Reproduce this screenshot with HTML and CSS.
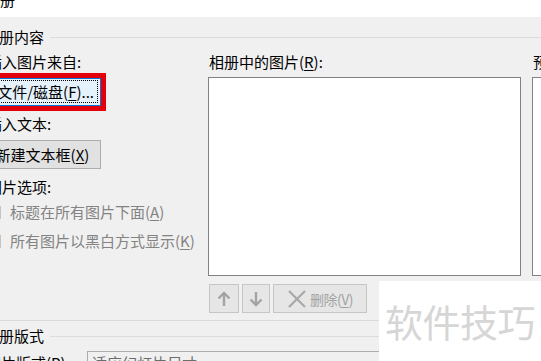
FILE: index.html
```html
<!DOCTYPE html>
<html lang="zh">
<head>
<meta charset="utf-8">
<link rel="stylesheet" href="styles.css">
</head>
<body>
<div class="dialog">
  <div class="titlebar"><span class="title">相册</span></div>
  <div class="content">
    <div class="group-head"><span class="group-label">相册内容</span><span class="group-line"></span></div>
    <div class="columns">
      <div class="left-col">
        <div class="label">插入图片来自:</div>
        <div class="highlight">
          <div class="btn btn-focus"><span class="focus-rect">文件/磁盘(<u>F</u>)...</span></div>
        </div>
        <div class="label label-text">插入文本:</div>
        <div class="btn btn-normal">新建文本框(<u>X</u>)</div>
        <div class="label label-opts">图片选项:</div>
        <div class="check-row first"><span class="checkbox"></span><span class="check-text">标题在所有图片下面(<u>A</u>)</span></div>
        <div class="check-row"><span class="checkbox"></span><span class="check-text">所有图片以黑白方式显示(<u>K</u>)</span></div>
      </div>
      <div class="mid-col">
        <div class="label">相册中的图片(<u>R</u>):</div>
        <div class="listbox"></div>
        <div class="btn-row">
          <div class="btn btn-disabled btn-up">
            <svg width="14" height="16" viewBox="0 0 14 16"><path d="M7 2 L7 15" stroke="#a3a3a3" stroke-width="2.4" fill="none"/><path d="M1.5 7.5 L7 2 L12.5 7.5" stroke="#a3a3a3" stroke-width="2.4" fill="none"/></svg>
          </div>
          <div class="btn btn-disabled btn-down">
            <svg width="14" height="16" viewBox="0 0 14 16"><path d="M7 1 L7 14" stroke="#a3a3a3" stroke-width="2.4" fill="none"/><path d="M1.5 8.5 L7 14 L12.5 8.5" stroke="#a3a3a3" stroke-width="2.4" fill="none"/></svg>
          </div>
          <div class="btn btn-disabled btn-del">
            <svg width="20" height="18" viewBox="0 0 20 18"><path d="M2 1 L18 17 M18 1 L2 17" stroke="#a8a8a8" stroke-width="2.2" fill="none"/></svg>
            <span class="del-text">删除(<u>V</u>)</span>
          </div>
        </div>
      </div>
      <div class="right-col">
        <div class="label">预览:</div>
        <div class="preview"></div>
      </div>
    </div>
    <div class="separator"></div>
    <div class="group-head group2"><span class="group-label">相册版式</span><span class="group-line"></span></div>
    <div class="layout-row">
      <span class="layout-label">图片版式(<u>P</u>):</span>
      <div class="combo">适应幻灯片尺寸</div>
    </div>
  </div>
  <div class="watermark">软件技巧</div>
</div>
</body>
</html>
```
FILE: styles.css
```css
html, body {
  margin: 0;
  padding: 0;
  width: 541px;
  height: 361px;
  overflow: hidden;
  background: #f0f0f0;
}
.dialog {
  position: relative;
  width: 541px;
  height: 361px;
  overflow: hidden;
  font-family: "Noto Sans CJK SC", "Microsoft YaHei", sans-serif;
  font-size: 15px;
  color: #000;
  background: #f0f0f0;
}
u { text-decoration: underline; text-underline-offset: 2px; }
.titlebar {
  height: 17px;
  background: #fff;
  overflow: hidden;
}
.title {
  display: block;
  margin-left: -15px;
  margin-top: -10px;
  line-height: 20px;
}
.content {
  margin-left: -14px;
  width: 600px;
}
.group-head {
  display: flex;
  align-items: center;
  height: 20px;
  margin-top: 10px;
}
.group-label {
  line-height: 20px;
  margin-left: -2px;
  padding-right: 6px;
  white-space: nowrap;
}
.group-line {
  flex: 1;
  height: 1px;
  background: #dcdcdc;
}
.columns {
  display: flex;
  margin-top: 5px;
}
.left-col {
  flex: 0 0 auto;
  box-sizing: border-box;
  width: 222px;
  display: flex;
  flex-direction: column;
  align-items: flex-start;
  padding-left: 1px;
}
.label {
  line-height: 20px;
  height: 20px;
  white-space: nowrap;
}
.highlight {
  margin-top: 1px;
  margin-left: -5px;
  border: 5px solid #e3000d;
}
.btn {
  box-sizing: border-box;
  display: flex;
  align-items: center;
  justify-content: center;
  white-space: nowrap;
}
.btn-focus {
  width: 114px;
  height: 28px;
  background: #e5f1fb;
  border: 1px solid #0078d7;
  padding: 1px 2px 2px 2px;
}
.focus-rect {
  display: flex;
  align-items: center;
  justify-content: flex-end;
  width: 100%;
  height: 100%;
  box-sizing: border-box;
  border: 1px dotted #000;
  padding-right: 3px;
}
.label-text { margin-top: 3px; }
.btn-normal {
  margin-top: 6px;
  margin-left: -3px;
  width: 117px;
  height: 29px;
  background: #e1e1e1;
  border: 1px solid #adadad;
}
.label-opts { margin-top: 8px; }
.check-row {
  display: flex;
  align-items: center;
  height: 20px;
  margin-top: 9px;
  color: #838383;
}
.check-row.first { margin-top: 5px; }
.checkbox {
  flex: 0 0 auto;
  width: 11px;
  height: 11px;
  border: 1px solid #c4c4c4;
  background: #f0f0f0;
  margin-left: 1px;
  margin-right: 9px;
}
.check-text { line-height: 20px; white-space: nowrap; }
.mid-col {
  flex: 0 0 auto;
  width: 313px;
  display: flex;
  flex-direction: column;
}
.mid-col .label { padding-left: 1px; }
.listbox {
  margin-top: 5px;
  height: 199px;
  box-sizing: border-box;
  background: #fff;
  border: 1px solid #828282;
}
.btn-row {
  display: flex;
  gap: 3px;
  margin-top: 8px;
  padding-left: 1px;
}
.btn-disabled {
  height: 29px;
  background: #e6e6e6;
  border: 1px solid #c6c6c6;
  color: #a3a3a3;
}
.btn-up { width: 30px; }
.btn-down { width: 28px; }
.btn-del {
  width: 94px;
  gap: 3px;
}
.del-text { line-height: 20px; font-size: 14px; letter-spacing: -0.5px; }
.right-col {
  flex: 0 0 auto;
  margin-left: 11px;
  display: flex;
  flex-direction: column;
  width: 40px;
}
.right-col .label { padding-left: 1px; }
.preview {
  margin-top: 5px;
  height: 199px;
  box-sizing: border-box;
  border: 1px solid #828282;
  background: #fff;
}
.separator {
  margin-top: 7px;
  height: 1px;
  background: #dadada;
}
.group2 { margin-top: 5px; }
.layout-row {
  display: flex;
  align-items: flex-start;
  margin-top: 5px;
}
.layout-label {
  flex: 0 0 auto;
  width: 101px;
  line-height: 20px;
  margin-top: 2px;
  white-space: nowrap;
}
.combo {
  flex: 0 0 auto;
  box-sizing: border-box;
  width: 300px;
  height: 26px;
  border: 1px solid #adadad;
  background: #f0f0f0;
  color: #6d6d6d;
  padding-left: 4px;
  line-height: 22px;
}
.watermark {
  position: absolute;
  left: 379px;
  top: 281px;
  width: 162px;
  height: 80px;
  background: #fff;
  color: #d6d6d6;
  font-size: 38px;
  line-height: 80px;
  padding-left: 6px;
  box-sizing: border-box;
  letter-spacing: -0.5px;
  white-space: nowrap;
  overflow: hidden;
}
```
